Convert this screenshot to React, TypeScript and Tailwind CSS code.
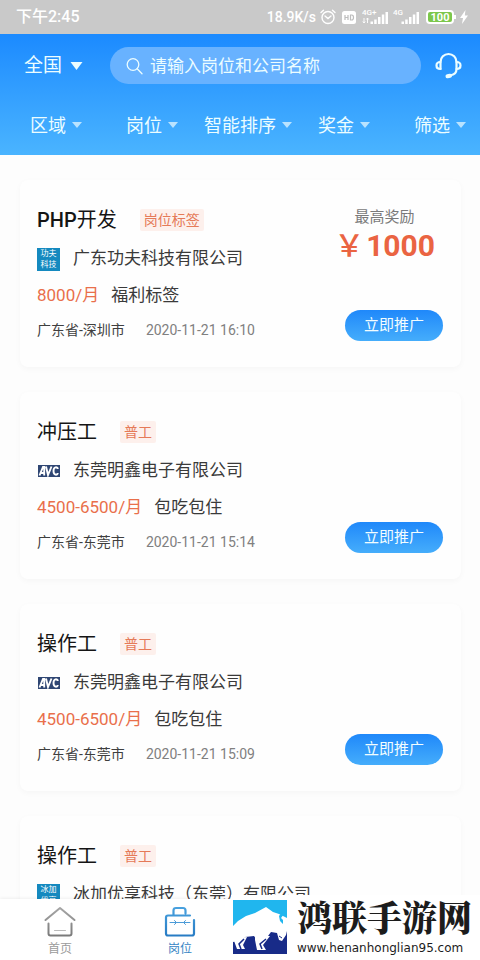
import { useState } from 'react';

type Job = {
  id: number;
  title: string;
  tag: string;
  logo: 'avc' | [string, string];
  company: string;
  details?: {
    salary: string;
    benefit: string;
    location: string;
    date: string;
  };
  reward?: string;
};

const jobs: Job[] = [
  {
    id: 1,
    title: 'PHP开发',
    tag: '岗位标签',
    logo: ['功夫', '科技'],
    company: '广东功夫科技有限公司',
    details: {
      salary: '8000/月',
      benefit: '福利标签',
      location: '广东省-深圳市',
      date: '2020-11-21 16:10',
    },
    reward: '1000',
  },
  {
    id: 2,
    title: '冲压工',
    tag: '普工',
    logo: 'avc',
    company: '东莞明鑫电子有限公司',
    details: {
      salary: '4500-6500/月',
      benefit: '包吃包住',
      location: '广东省-东莞市',
      date: '2020-11-21 15:14',
    },
  },
  {
    id: 3,
    title: '操作工',
    tag: '普工',
    logo: 'avc',
    company: '东莞明鑫电子有限公司',
    details: {
      salary: '4500-6500/月',
      benefit: '包吃包住',
      location: '广东省-东莞市',
      date: '2020-11-21 15:09',
    },
  },
  {
    id: 4,
    title: '操作工',
    tag: '普工',
    logo: ['冰加', '优享'],
    company: '冰加优享科技（东莞）有限公司',
  },
];

const filters = ['区域', '岗位', '智能排序', '奖金', '筛选'];

const Signal = ({ label, data }: { label: string; data?: boolean }) => (
  <svg width="27" height="16" viewBox="0 0 27 16" fill="#fff">
    <text x="0" y="6" fontSize="8" fontFamily="Roboto, sans-serif">{label}</text>
    {data && <path d="M2 9v5M0.800 12.500L2 14l1.200-1.500M5.500 14V9M4.300 10.500L5.500 9l1.200 1.500" stroke="#fff" strokeWidth="0.900" fill="none" />}
    <path d="M8.500 12.500h2.500V15H8.500zM12.200 10.500h2.500V15h-2.500zM16 8h2.500v7H16zM19.800 5.500h2.500V15h-2.500zM23.500 3H26v12h-2.500z" />
  </svg>
);

const StatusBar = () => (
  <div className="flex h-[34px] shrink-0 items-center justify-between bg-[#c9c9c9] pr-3 pl-4 font-medium text-white">
    <span className="text-[16px]">下午2:45</span>
    <div className="flex items-center text-[14px]">
      <span className="mr-1">18.9K/s</span>
      <svg width="16" height="16" viewBox="0 0 16 16" fill="none" stroke="#fff" strokeWidth="1.400" strokeLinecap="round">
        <circle cx="8" cy="8.500" r="6" />
        <path d="M1 3.500L3.500 1.200M15 3.500L12.500 1.200M5 7l3 2.500L11 7" />
      </svg>
      <svg className="ml-1.5" width="14" height="13" viewBox="0 0 14 13">
        <rect width="14" height="13" rx="2.500" fill="#fff" />
        <path d="M3 4v5M3 6.500h3M6 4v5M8.500 4v5h1.200q1.800 0 1.800-2.500T9.700 4z" fill="none" stroke="#bdbdbd" strokeWidth="1.200" />
      </svg>
      <div className="ml-1.5 flex gap-1">
        <Signal label="4G+" data />
        <Signal label="4G" />
      </div>
      <div className="ml-1.5 flex h-[14px] w-[28px] items-center justify-center rounded-sm border-2 border-white bg-[#7cc74b] text-[11px] leading-none font-bold">
        100
      </div>
      <div className="h-1 w-[2px] bg-white" />
      <svg className="ml-1" width="8" height="14" viewBox="0 0 8 14" fill="#fff">
        <path d="M5.500 0L0 8h3l-1 6 6-8.500H4.800z" />
      </svg>
    </div>
  </div>
);

const Header = () => {
  const [keyword, setKeyword] = useState('');

  return (
    <header className="shrink-0 bg-linear-to-b from-[#1b8aff] to-[#4ab4ff] pt-[13px] text-[#ecfdff]">
      <div className="flex items-center pr-[18px] pl-6">
        <button type="button" className="flex items-center gap-2 text-[19px] leading-6">
          全国
          <svg width="13" height="8" viewBox="0 0 13 8" fill="currentColor">
            <path d="M0.500 0h12L6.500 8z" />
          </svg>
        </button>
        <label className="ml-[27px] flex h-[37px] min-w-0 flex-1 items-center gap-[7px] rounded-full bg-[#68b2ff] pr-4 pl-4">
          <svg width="17" height="18" viewBox="0 0 17 18" fill="none" stroke="currentColor" strokeWidth="1.300" strokeLinecap="round">
            <circle cx="7" cy="7.500" r="5.800" />
            <path d="M11.200 11.800L16 16.800" />
          </svg>
          <input
            type="text"
            aria-label="搜索"
            placeholder="请输入岗位和公司名称"
            value={keyword}
            onChange={(e) => setKeyword(e.target.value)}
            className="min-w-0 flex-1 bg-transparent text-[17px] leading-6 outline-none placeholder:text-[#ecfdff]"
          />
        </label>
        <button type="button" aria-label="客服" className="ml-[14px]">
          <svg width="27" height="28" viewBox="0 0 27 28" fill="none" stroke="currentColor" strokeWidth="2.200" strokeLinecap="round" strokeLinejoin="round">
            <path d="M5.500 17V10a8 8 0 0 1 16 0v7c0 3-2 5.500-5.500 6.300" />
            <path d="M5.500 10C2.500 10 1.500 11.500 1.500 13.500s1 3.500 4 3.500M21.500 10c3 0 4 1.500 4 3.500s-1 3.500-4 3.500" />
            <path d="M12.500 24.300l2.500-.5" strokeWidth="4" />
          </svg>
        </button>
      </div>
      <div className="mt-[11px] grid h-[60px] grid-cols-5">
        {filters.map((name) => (
          <button key={name} type="button" className="flex items-center justify-center gap-1.5 pl-4 text-[18px] whitespace-nowrap">
            {name}
            <svg width="10" height="6" viewBox="0 0 10 6" fill="#b9e3ff" className="shrink-0">
              <path d="M0 0h10L5 6z" />
            </svg>
          </button>
        ))}
      </div>
    </header>
  );
};

const CompanyLogo = ({ logo }: { logo: Job['logo'] }) => {
  if (logo === 'avc') {
    return (
      <svg width="23" height="12" viewBox="0 0 23 12" className="shrink-0">
        <rect x="1" width="22" height="12" fill="#2f4673" />
        <path
          d="M2.500 10.500L6 2h1.200v8.500M4 8h3M9 1.500l2 8.500L14.500 1.500M20.800 4c-.3-2.500-4.300-2.500-4.300 2s4 4.500 4.300 2"
          fill="none"
          stroke="#fff"
          strokeWidth="1.900"
        />
      </svg>
    );
  }
  return (
    <div className="flex h-[23px] w-[23px] shrink-0 flex-col items-center justify-center bg-[#1489bf] text-[8px] leading-[11px] text-white">
      <span>{logo[0]}</span>
      <span>{logo[1]}</span>
    </div>
  );
};

const JobCard = ({ job }: { job: Job }) => (
  <article className="flex shrink-0 justify-between rounded-lg bg-[#fefefe] pr-[18px] pl-[17px] shadow-[0_2px_6px_rgba(0,0,0,0.03)]">
    <div className="pt-6 pb-[21px] whitespace-nowrap">
      <div className="flex h-8 items-center gap-[23px]">
        <h2 className="text-[20px] text-[#151515]">
          {job.title.startsWith('PHP') ? (
            <>
              <span className="font-medium">PHP</span>
              {job.title.slice(3)}
            </>
          ) : (
            job.title
          )}
        </h2>
        <span className="rounded-xs bg-[#fdf0ec] px-1 text-[14px] leading-[22px] text-[#e57a58]">{job.tag}</span>
      </div>
      <div className="mt-1 flex h-[38px] items-center gap-[13px]">
        <CompanyLogo logo={job.logo} />
        <span className="text-[17px] text-[#3a3a3a]">{job.company}</span>
      </div>
      {job.details && (
        <>
          <div className="flex h-9 items-center gap-3 text-[17px]">
            <span className="text-[#e96f4b]">{job.details.salary}</span>
            <span className="text-[#3a3a3a]">{job.details.benefit}</span>
          </div>
          <div className="flex h-8 items-center gap-[21px] text-[14px]">
            <span className="text-[#3f3f3f]">{job.details.location}</span>
            <time className="text-[#808080]">{job.details.date}</time>
          </div>
        </>
      )}
    </div>
    {job.details && (
      <div className="flex flex-col items-end pt-[26px] pb-[26px]">
        {job.reward && (
          <div className="mr-2 text-center">
            <p className="text-[15px] leading-[22px] text-[#7a7a7a]">最高奖励</p>
            <p className="flex items-center gap-0.5 text-[30px] leading-9 text-[#ea6442]">
              <span className="font-medium">￥</span>
              <span className="font-bold">{job.reward}</span>
            </p>
          </div>
        )}
        <button
          type="button"
          className="mt-auto h-[31px] w-[98px] rounded-full bg-linear-to-b from-[#1f88fa] to-[#45adfb] text-[15px] text-[#f2fdff]"
        >
          立即推广
        </button>
      </div>
    )}
  </article>
);

const HomeIcon = () => (
  <svg width="32" height="32" viewBox="0 0 32 32" fill="none" strokeLinecap="round" strokeLinejoin="round">
    <defs>
      <linearGradient id="home" x1="0" y1="0" x2="0" y2="32" gradientUnits="userSpaceOnUse">
        <stop stopColor="#a8a8a8" />
        <stop offset="1" stopColor="#777" />
      </linearGradient>
    </defs>
    <path d="M1.500 14L16 2l14.500 12M4.500 17.500v10q0 2 2 2h19q2 0 2-2v-10" stroke="url(#home)" strokeWidth="2" />
    <path d="M10.500 24.500h11" stroke="#bbb" strokeWidth="1" />
  </svg>
);

const BriefcaseIcon = () => (
  <svg width="32" height="32" viewBox="0 0 32 32" fill="none" strokeLinecap="round" strokeLinejoin="round">
    <defs>
      <linearGradient id="case" x1="0" y1="0" x2="0" y2="32" gradientUnits="userSpaceOnUse">
        <stop stopColor="#4aa3e0" />
        <stop offset="1" stopColor="#2579c2" />
      </linearGradient>
    </defs>
    <path
      d="M9.500 8.500V4.500q0-2.500 2.500-2.500h7q2.500 0 2.500 2.500v3M26 9.500H4q-2 0-2 2v16q0 2 2 2h24q2 0 2-2V14"
      stroke="url(#case)"
      strokeWidth="2.200"
    />
    <path d="M6 16.500h20M10.500 14.500l2 2-2 2M21.500 14.500l-2 2 2 2" stroke="#4b9bd8" strokeWidth="1" />
  </svg>
);

const BisonLogo = () => (
  <svg width="54" height="54" viewBox="0 0 54 54" className="shrink-0">
    <path d="M0 0h54v28H0z" fill="#20b6ee" />
    <path d="M0 28h54v26H0z" fill="#182b88" />
    {/* body and head */}
    <path d="M0 26L5 21 13 16 22 13 33 7 40 12 46 14 50 16 54 18V31L53 35 49 41 46 40 44 33 38 32 35 36 30 40 24 40 21 36 12 37 9 40 0 42z" fill="#fff" />
    {/* legs */}
    <path d="M22 36L22 40 24 50H33L30 45 37 36zM0 38L4 49H12L10 45 14 37z" fill="#fff" />
    <path d="M33 39L27 44 29 49M11 39L6 44 8 49" fill="none" stroke="#182b88" strokeWidth="1.500" />
    {/* horn */}
    <path d="M49 12L46 16 47 21 50 24 50 20 48 18 51 14z" fill="#20b6ee" />
    <path d="M46 36L49 38" stroke="#182b88" strokeWidth="1" />
  </svg>
);

const TabBar = () => (
  <nav className="relative grid h-[61px] shrink-0 grid-cols-4 bg-white shadow-[0_-1px_3px_rgba(0,0,0,0.06)]">
    <a href="#home" className="flex flex-col items-center pt-[7px] text-[12px] leading-4 text-[#9b9b9b]">
      <HomeIcon />
      <span className="mt-[3px]">首页</span>
    </a>
    <a href="#jobs" className="flex flex-col items-center pt-[7px] text-[12px] leading-4 text-[#3584c4]">
      <BriefcaseIcon />
      <span className="mt-[3px]">岗位</span>
    </a>
    <a
      href="#site"
      className="absolute right-0 bottom-0 flex h-[65px] items-start gap-2.5 bg-white pt-[5px] pr-2 pl-0.5 text-[#1c1c1c]"
    >
      <BisonLogo />
      <span className="flex flex-col">
        <span className="font-['Liberation_Serif','Noto_Serif_CJK_SC','Noto_Sans_CJK_SC',serif] text-[35px] leading-[40px] font-black">
          鸿联手游网
        </span>
        <span className="font-['DejaVu_Sans',sans-serif] text-[12px] leading-4">www.henanhonglian95.com</span>
      </span>
    </a>
  </nav>
);

const App = () => (
  <div className="flex h-screen flex-col overflow-hidden bg-[#fdfdfd] font-['Roboto','Noto_Sans_CJK_SC',sans-serif]">
    <StatusBar />
    <Header />
    <main className="flex min-h-0 flex-1 flex-col gap-[25px] overflow-y-auto pt-[25px] pr-[19px] pl-5 [scrollbar-width:none]">
      {jobs.map((job) => (
        <JobCard key={job.id} job={job} />
      ))}
    </main>
    <TabBar />
  </div>
);

export default App;
